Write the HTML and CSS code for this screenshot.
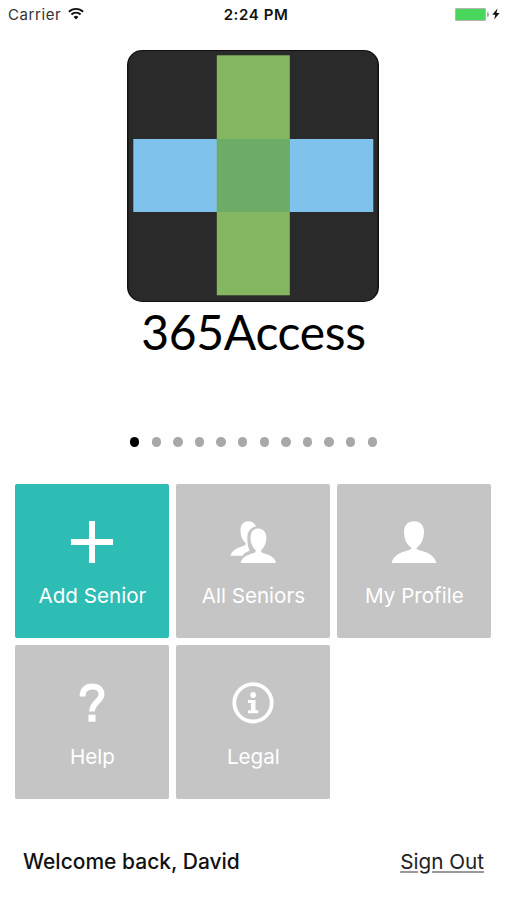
FILE: index.html
```html
<!DOCTYPE html>
<html lang="en">
<head>
    <meta charset="UTF-8">
    <meta name="viewport" content="width=device-width, initial-scale=1.0">
    <title>365Access</title>
    <link rel="stylesheet" href="styles.css">
</head>
<body>

    <!-- Status bar -->
    <div class="status-bar">
        <div class="carrier">
            <span>Carrier</span>
            <svg width="16" height="13" viewBox="0 0 16 13" fill="none" stroke="#111" stroke-width="1.9">
                <path d="M0.9 4.8a10.2 10.2 0 0 1 14.2 0"/>
                <path d="M3.4 7.5a6.6 6.6 0 0 1 9.2 0"/>
                <path d="M8 12.6l-2.4-2.7a3.5 3.5 0 0 1 4.8 0z" fill="#111" stroke="none"/>
            </svg>
        </div>
        <div class="time">2:24 PM</div>
        <div class="battery">
            <span class="battery-level"></span>
            <span class="battery-tip"></span>
            <svg width="8" height="12" viewBox="0 0 8 12">
                <path d="M5.4 0.5L0.3 6.7h3L2.2 11.5 7.6 5H4.5z" fill="#111"/>
            </svg>
        </div>
    </div>

    <!-- Logo -->
    <div class="logo">
        <svg width="252" height="252" viewBox="0 0 252 252">
            <rect width="252" height="252" rx="15" fill="#111"/>
            <rect x="1.5" y="1" width="249" height="250" rx="14" fill="#2a2a2a"/>
            <rect x="6.3" y="89" width="240" height="73" fill="#7fc3ec"/>
            <rect x="89.8" y="5.3" width="73" height="240" fill="#85b763"/>
            <rect x="89.8" y="89" width="73" height="73" fill="#6dac66"/>
        </svg>
        <h1>365Access</h1>
    </div>

    <div class="dots">
        <span class="dot active"></span>
        <span class="dot"></span>
        <span class="dot"></span>
        <span class="dot"></span>
        <span class="dot"></span>
        <span class="dot"></span>
        <span class="dot"></span>
        <span class="dot"></span>
        <span class="dot"></span>
        <span class="dot"></span>
        <span class="dot"></span>
        <span class="dot"></span>
    </div>

    <!-- Menu -->
    <div class="menu">
        <button class="tile primary">
            <svg width="46" height="42" viewBox="0 0 46 42" fill="#fff">
                <path d="M20 0h6v18h18v6H26v18h-6V24H2v-6h18z"/>
            </svg>
            <span>Add Senior</span>
        </button>
        <button class="tile">
            <svg width="46" height="42" viewBox="0 0 46 42" fill="#fff">
                <path d="M26 5.6C24.6 2 22 .3 18.300 .3C13.300 .3 10.500 3.800 10.500 9.500C10.500 14.500 12.500 19.300 15.300 21.600C16.300 23.900 15 24.700 12 25.500C5.800 27.200 1.700 30 .5 34.700H12.500C14.500 31.900 17 30.600 19.700 29.500C17.900 26.600 17.300 21 17.300 17C17.300 11 20.300 6.500 26 5.600z"/>
                <path d="M28.300 7.500C23.500 7.500 20.500 11 20.500 17C20.500 22 22.700 26.500 25.400 28.700C26.500 31.500 24.500 32 21.500 32.800C15.500 34.500 11.500 37.500 10.700 41.900H46C45.200 37.500 41.200 34.500 35.200 32.800C32.200 32 30.300 31.500 31.400 28.700C34.300 26.500 36.300 22 36.300 17C36.300 11 33.200 7.500 28.300 7.500z"/>
            </svg>
            <span>All Seniors</span>
        </button>
        <button class="tile">
            <svg width="46" height="42" viewBox="0 0 46 42" fill="#fff">
                <path d="M23 .3C17 .3 13 4.300 13 10.500C13 17.500 15.500 23.300 19.700 26.300C21.300 28 19.700 28.700 17 29.400C8.500 31.200 1.800 35.500 .7 41.900H45.300C44.200 35.500 37.500 31.200 29 29.400C26.300 28.700 24.700 28 26.300 26.300C30.500 23.300 33 17.500 33 10.500C33 4.300 29 .3 23 .3z"/>
            </svg>
            <span>My Profile</span>
        </button>
        <button class="tile">
            <svg width="46" height="42" viewBox="0 0 46 42">
                <path d="M13.500 14.500C13.500 7.800 17 4.500 23.300 4.500C29.200 4.500 32.500 7.500 32.500 12.300C32.500 19.500 23 20 23 29.500" fill="none" stroke="#fff" stroke-width="5.800"/>
                <rect x="19.500" y="32.700" width="7" height="7" fill="#fff"/>
            </svg>
            <span>Help</span>
        </button>
        <button class="tile">
            <svg width="46" height="42" viewBox="0 0 46 42" fill="#fff">
                <circle cx="23" cy="20.800" r="18.700" fill="none" stroke="#fff" stroke-width="3.800"/>
                <circle cx="23.200" cy="13" r="2.900"/>
                <path d="M18 18h7.500v10.200H28.300v3H18v-3h3v-7.200h-3z"/>
            </svg>
            <span>Legal</span>
        </button>
    </div>

    <div class="footer">
        <span class="welcome">Welcome back, David</span>
        <a href="#" class="sign-out">Sign Out</a>
    </div>

</body>
</html>
```

FILE: styles.css
```css
* {
    box-sizing: border-box;
}

body {
    background-color: #fefefe;
    color: #111;
    font-family: Inter, "Liberation Sans", sans-serif;
    margin: 0;
    height: 900px;
    overflow: hidden;
}

.status-bar {
    display: grid;
    grid-template-columns: 1fr auto 1fr;
    align-items: center;
    height: 28px;
    padding: 0 6px 0 8px;
    font-size: 15px;
}

.carrier {
    display: flex;
    align-items: center;
    gap: 7px;
    color: #333;
    letter-spacing: 0.6px;
}

.carrier svg {
    margin-top: -2px;
}

.time {
    font-weight: 600;
    letter-spacing: 0.6px;
    padding-left: 4px;
}

.battery {
    display: flex;
    align-items: center;
    justify-content: flex-end;
}

.battery-level {
    width: 31px;
    height: 13px;
    background-color: #48d65d;
    border: 1px solid #b5b5b5;
    border-radius: 1px;
}

.battery-tip {
    width: 2px;
    height: 5px;
    margin: 0 3px 0 1px;
    background-color: #aaa;
    border-radius: 0 2px 2px 0;
}

.logo {
    display: flex;
    flex-direction: column;
    align-items: center;
    padding: 22px 1px 0 0;
}

.logo h1 {
    margin: 0;
    padding-left: 2px;
    color: #000;
    font-family: Lato, sans-serif;
    font-size: 48px;
    font-weight: 400;
    letter-spacing: -0.3px;
    line-height: 60px;
}

.dots {
    display: flex;
    justify-content: center;
    gap: 12.1px;
    margin-top: 75px;
    padding-left: 1px;
}

.dot {
    width: 9.5px;
    height: 9.5px;
    border-radius: 50%;
    background-color: #a8a8a8;
}

.dot.active {
    background-color: #000;
}

.menu {
    display: grid;
    grid-template-columns: repeat(3, 154px);
    grid-auto-rows: 154px;
    gap: 7px;
    margin-top: 37.5px;
    padding-left: 15.4px;
}

.tile {
    display: flex;
    flex-direction: column;
    align-items: center;
    padding: 37px 0 0;
    border: none;
    border-radius: 2px;
    background-color: #c5c5c5;
    color: #fff;
    font-family: inherit;
    font-size: 20.6px;
    line-height: 26px;
    cursor: pointer;
}

.tile span {
    margin-top: 20px;
}

.tile.primary {
    background-color: #2dbdb4;
}

.footer {
    display: flex;
    justify-content: space-between;
    margin-top: 50px;
    padding: 0 22px 0 23px;
    font-size: 21px;
    line-height: 26px;
}

.welcome {
    font-weight: 500;
}

.sign-out {
    color: #222;
    font-size: 20.7px;
    text-decoration-color: #999;
    text-decoration-thickness: 2px;
    text-underline-offset: 2px;
}
```
